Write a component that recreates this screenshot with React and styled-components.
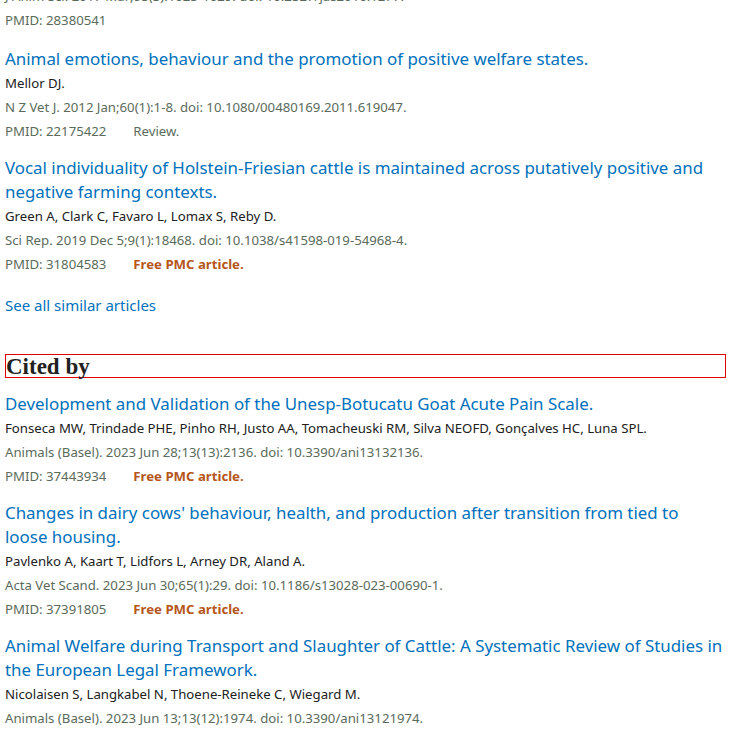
import React from 'react';
import styled, { createGlobalStyle } from 'styled-components';

const GlobalStyle = createGlobalStyle`
  html, body {
    margin: 0;
    padding: 0;
    background: #ffffff;
    overflow: hidden;
  }
`;

const Page = styled.main`
  width: 730px;
  height: 730px;
  overflow: hidden;
  box-sizing: border-box;
  padding: 0 4px 0 5px;
  font-family: 'Noto Sans', 'Open Sans', sans-serif;
  color: #212121;
`;

// page is scrolled a bit, the first line is cut at the top
const Scroller = styled.div`
  margin-top: -16px;
`;

const ArticleList = styled.ul`
  list-style: none;
  margin: ${({ $top }) => $top || 0}px 0 0;
  padding: 0;
`;

const Article = styled.li`
  margin-bottom: 13px;
`;

const Title = styled.a`
  display: block;
  padding-right: 3px;
  font-size: 16.9px;
  line-height: 24px;
  color: #0071bc;
  text-decoration: none;
`;

const Authors = styled.div`
  font-size: 13.2px;
  line-height: 24px;
  color: #212121;
`;

const Citation = styled.div`
  font-size: 13.2px;
  line-height: 24px;
  color: #5b6b5b;
`;

const MetaRow = styled.div`
  display: flex;
  font-size: 13.2px;
  line-height: 24px;
  color: #5b6b5b;
`;

const Tag = styled.span`
  margin-left: 27px;
  font-weight: ${({ $free }) => ($free ? 700 : 400)};
  color: ${({ $free }) => ($free ? '#b5561b' : '#5b6b5b')};
`;

const SeeAll = styled.a`
  display: block;
  margin-top: 17px;
  font-size: 15px;
  line-height: 24px;
  color: #0071bc;
  text-decoration: none;
`;

const SectionHeading = styled.h2`
  margin: 37px 0 14px;
  height: 24px;
  border: 1px solid #e00000;
  box-sizing: border-box;
  font-family: 'Liberation Serif', 'DejaVu Serif', serif;
  font-size: 23px;
  font-weight: 700;
  line-height: 23px;
  color: #212121;
`;

const similar = [
  {
    title: 'Animal emotions, behaviour and the promotion of positive welfare states.',
    authors: 'Mellor DJ.',
    citation: 'N Z Vet J. 2012 Jan;60(1):1-8. doi: 10.1080/00480169.2011.619047.',
    pmid: '22175422',
    tag: 'Review.',
  },
  {
    title:
      'Vocal individuality of Holstein-Friesian cattle is maintained across putatively positive and negative farming contexts.',
    authors: 'Green A, Clark C, Favaro L, Lomax S, Reby D.',
    citation: 'Sci Rep. 2019 Dec 5;9(1):18468. doi: 10.1038/s41598-019-54968-4.',
    pmid: '31804583',
    tag: 'Free PMC article.',
    free: true,
  },
];

const citedBy = [
  {
    title: 'Development and Validation of the Unesp-Botucatu Goat Acute Pain Scale.',
    authors:
      'Fonseca MW, Trindade PHE, Pinho RH, Justo AA, Tomacheuski RM, Silva NEOFD, Gonçalves HC, Luna SPL.',
    citation: 'Animals (Basel). 2023 Jun 28;13(13):2136. doi: 10.3390/ani13132136.',
    pmid: '37443934',
    tag: 'Free PMC article.',
    free: true,
  },
  {
    title:
      "Changes in dairy cows' behaviour, health, and production after transition from tied to loose housing.",
    authors: 'Pavlenko A, Kaart T, Lidfors L, Arney DR, Aland A.',
    citation: 'Acta Vet Scand. 2023 Jun 30;65(1):29. doi: 10.1186/s13028-023-00690-1.',
    pmid: '37391805',
    tag: 'Free PMC article.',
    free: true,
  },
  {
    title:
      'Animal Welfare during Transport and Slaughter of Cattle: A Systematic Review of Studies in the European Legal Framework.',
    authors: 'Nicolaisen S, Langkabel N, Thoene-Reineke C, Wiegard M.',
    citation: 'Animals (Basel). 2023 Jun 13;13(12):1974. doi: 10.3390/ani13121974.',
    pmid: '37370484',
    tag: 'Free PMC article.',
    free: true,
  },
];

function ArticleItem({ item }) {
  return (
    <Article>
      <Title href="#">{item.title}</Title>
      <Authors>{item.authors}</Authors>
      <Citation>{item.citation}</Citation>
      <MetaRow>
        <span>PMID: {item.pmid}</span>
        {item.tag && <Tag $free={item.free}>{item.tag}</Tag>}
      </MetaRow>
    </Article>
  );
}

export default function App() {
  return (
    <>
      <GlobalStyle />
      <Page>
        <Scroller>
          <Citation>J Anim Sci. 2017 Mar;95(3):1025-1029. doi: 10.2527/jas2016.1277.</Citation>
          <MetaRow>
            <span>PMID: 28380541</span>
          </MetaRow>
          <ArticleList $top={15}>
            {similar.map((item) => (
              <ArticleItem key={item.pmid} item={item} />
            ))}
          </ArticleList>
          <SeeAll href="#">See all similar articles</SeeAll>
          <SectionHeading>Cited by</SectionHeading>
          <ArticleList>
            {citedBy.map((item) => (
              <ArticleItem key={item.pmid} item={item} />
            ))}
          </ArticleList>
        </Scroller>
      </Page>
    </>
  );
}
